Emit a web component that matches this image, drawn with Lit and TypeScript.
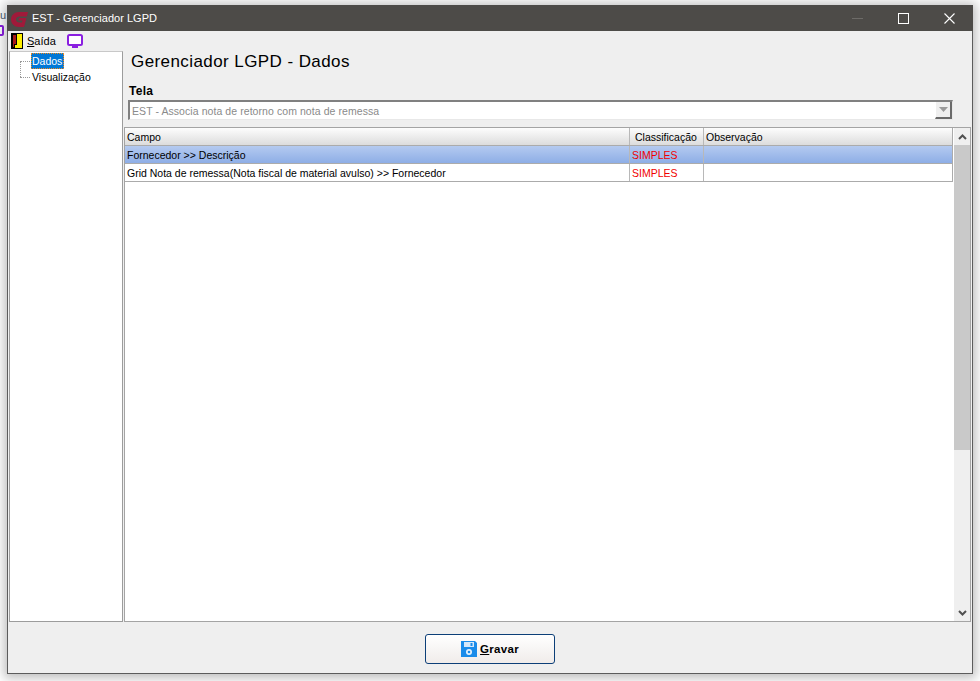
import { LitElement, html, css } from "lit";
import { customElement } from "lit/decorators.js";

@customElement("app-root")
export class AppRoot extends LitElement {
  static styles = css`
    :host {
      display: block;
      width: 980px;
      height: 681px;
      box-sizing: border-box;
      padding: 5px 7px 7px 7px;
      position: relative;
      background: #fff;
      overflow: hidden;
      font-family: "Liberation Sans", Arial, sans-serif;
      font-size: 10.5px;
      color: #000;
    }
    .bg-u { position: absolute; left: 0; top: 9px; font-size: 11px; color: #4a5a70; }
    .bg-box { position: absolute; left: -7px; top: 25px; width: 7px; height: 7px; border: 2px solid #8a1fe0; border-radius: 2px; }
    .window {
      position: relative;
      height: 669px;
      display: flex;
      flex-direction: column;
      background: #efefef;
      border: solid #5c5c5c;
      border-width: 0 1px 1px 1px;
      box-shadow: 0 1px 10px 3px rgba(0, 0, 0, 0.26);
      box-sizing: border-box;
    }
    .titlebar {
      height: 26px;
      margin: 0 -1px;
      background: #4d4b48;
      display: flex;
      align-items: center;
      color: #fff;
      font-size: 11px;
      letter-spacing: 0.02px;
      flex: none;
    }
    .logo { margin: 3px 0 0 4px; width: 17px; height: 15px; display: block; }
    .title-text { margin-left: 4px; flex: 1; }
    .ctrl { width: 46px; height: 26px; display: flex; align-items: center; justify-content: center; }
    .ctrl svg { display: block; }
    .ctrl.last { margin-right: 1px; }
    .menubar { height: 20px; display: flex; align-items: center; flex: none; font-size: 11px; }
    .door { margin-left: 3px; display: block; }
    .menu-label { margin-left: 4px; }
    .menu-label u { text-underline-offset: 1px; }
    .monitor { margin-left: 11px; display: block; }
    .body { flex: 1; display: flex; padding-left: 1px; min-height: 0; }
    .tree {
      width: 114px;
      box-sizing: border-box;
      background: #fff;
      border: 1px solid #9c9c9c;
      border-top-color: #c8c8c8;
      position: relative;
      padding: 1px 0 0 21px;
      flex: none;
    }
    .tree-line-v { position: absolute; left: 10px; top: 9px; height: 16px; border-left: 1px dotted #999; }
    .tree-line-h { position: absolute; left: 10px; width: 10px; border-top: 1px dotted #999; }
    .tl1 { top: 9px; }
    .tl2 { top: 25px; }
    .node { height: 16px; line-height: 17px; padding: 0 1px; width: max-content; box-sizing: border-box; }
    .node.sel { background: #0078d7; color: #fff; outline: 1px dotted #f08a1c; outline-offset: -1px; padding-right: 2px; }
    .main { flex: 1; margin-left: 1px; display: flex; flex-direction: column; min-width: 0; margin-right: 1px; }
    h1 {
      margin: 0;
      font-size: 17px;
      font-weight: 400;
      letter-spacing: 0.42px;
      padding: 1px 0 0 7px;
      height: 30px;
      line-height: 20px;
      box-sizing: border-box;
    }
    .label { font-weight: 700; font-size: 12px; padding-left: 5px; height: 17px; line-height: 20px; letter-spacing: 0.3px; }
    .combo {
      margin: 2px 18px 0 4px;
      height: 20px;
      box-sizing: border-box;
      background: #fff;
      border: solid #808080;
      border-width: 2px 1px 1px 2px;
      border-right-color: #e8e8e8;
      border-bottom-color: #e8e8e8;
      display: flex;
      align-items: center;
      padding-left: 2px;
      color: #8a8a8a;
      letter-spacing: 0.07px;
    }
    .combo span { flex: 1; }
    .combo-btn {
      width: 17px;
      height: 17px;
      box-sizing: border-box;
      background: #efefef;
      border: solid #6a6a6a;
      border-width: 0 2px 2px 0;
      border-left: 1px solid #fff;
      display: flex;
      align-items: center;
      justify-content: center;
    }
    .grid-wrap {
      flex: 1;
      margin-top: 7px;
      border: 1px solid #a4a4a4;
      background: #fff;
      display: flex;
      min-height: 0;
    }
    .grid { width: 828px; flex: none; }
    .row {
      display: grid;
      grid-template-columns: 505px 74px 1fr;
      height: 18px;
      line-height: 19px;
      border-bottom: 1px solid #ababab;
      border-right: 1px solid #ababab;
      box-sizing: border-box;
    }
    .row > div { padding-left: 2px; border-right: 1px solid #b8b8b8; white-space: nowrap; overflow: hidden; }
    .row > div:last-child { border-right: none; }
    .head { background: linear-gradient(#fdfdfd, #dcdcdc); }
    .head > div.c2 { padding-left: 5px; }
    .sel-row { background: linear-gradient(#b4caf0, #8eaee6); }
    .red { color: #f00000; }
    .sb { flex: 1; margin-left: 1px; background: #efefef; display: flex; flex-direction: column; align-items: stretch; }
    .sb-btn { height: 17px; display: flex; align-items: center; justify-content: center; flex: none; background: #efefef; }
    .sb-thumb { height: 305px; background: #c9c9c9; flex: none; }
    .sb-rest { flex: 1; }
    .footer { height: 51px; flex: none; display: flex; align-items: center; justify-content: center; padding-top: 3px; box-sizing: border-box; padding-right: 1px; }
    button {
      width: 130px;
      height: 30px;
      box-sizing: border-box;
      background: linear-gradient(#ffffff, #f0ecea);
      border: 1px solid #0c3f78;
      border-radius: 3px;
      display: flex;
      align-items: center;
      justify-content: center;
      gap: 3px;
      padding: 0 0 0 1px;
      font: 700 11.5px "Liberation Sans", Arial, sans-serif;
      letter-spacing: 0.3px;
      color: #000;
    }
    button svg { display: block; }
  `;

  render() {
    return html`
      <div class="bg-u">u</div>
      <div class="bg-box"></div>
      <div class="window">
        <div class="titlebar">
          <svg class="logo" viewBox="0 0 17 15">
            <path d="M17 0H8C3.500 0 0 3.300 0 7.500S3.500 15 8 15h5L15.500 6H8L7.300 8.500H11.500L11 10.500H8.500C6.500 10.500 5 9.300 5 7.500S6.500 4.500 8.500 4.500H15.800z" fill="#a01a3a"/>
          </svg>
          <div class="title-text">EST - Gerenciador LGPD</div>
          <div class="ctrl">
            <svg width="11" height="11" viewBox="0 0 11 11"><path d="M0 5.500H11" stroke="#6d6b68" stroke-width="1"/></svg>
          </div>
          <div class="ctrl">
            <svg width="11" height="11" viewBox="0 0 11 11"><rect x=".5" y=".5" width="10" height="10" fill="none" stroke="#fff"/></svg>
          </div>
          <div class="ctrl last">
            <svg width="11" height="11" viewBox="0 0 11 11"><path d="M.5 .5L10.500 10.500M10.500 .5L.5 10.500" stroke="#fff" stroke-width="1.100"/></svg>
          </div>
        </div>
        <div class="menubar">
          <svg class="door" width="12" height="16" viewBox="0 0 12 16">
            <rect width="12" height="16" fill="#000"/>
            <rect x="1" y="1" width="10" height="14" fill="#ffef00"/>
            <path d="M1 1h5v11H4v3H1z" fill="#000"/>
            <path d="M2 2h3v9H3v3H2z" fill="#a81818"/>
          </svg>
          <span class="menu-label"><u>S</u>aída</span>
          <svg class="monitor" width="16" height="14" viewBox="0 0 16 14">
            <rect x="1" y="1" width="14" height="10" rx="1.500" fill="#fff" stroke="#8a1fe0" stroke-width="2"/>
            <path d="M5 13H11" stroke="#8a1fe0" stroke-width="2"/>
          </svg>
        </div>
        <div class="body">
          <div class="tree">
            <div class="tree-line-v"></div>
            <div class="tree-line-h tl1"></div>
            <div class="tree-line-h tl2"></div>
            <div class="node sel">Dados</div>
            <div class="node">Visualização</div>
          </div>
          <div class="main">
            <h1>Gerenciador LGPD - Dados</h1>
            <div class="label">Tela</div>
            <div class="combo">
              <span>EST - Associa nota de retorno com nota de remessa</span>
              <div class="combo-btn">
                <svg width="9" height="5" viewBox="0 0 9 5"><path d="M0 0H9L4.500 5z" fill="#9a9a9a"/></svg>
              </div>
            </div>
            <div class="grid-wrap">
              <div class="grid">
                <div class="row head">
                  <div>Campo</div><div class="c2">Classificação</div><div>Observação</div>
                </div>
                <div class="row sel-row">
                  <div>Fornecedor >> Descrição</div><div class="red">SIMPLES</div><div></div>
                </div>
                <div class="row">
                  <div>Grid Nota de remessa(Nota fiscal de material avulso) >> Fornecedor</div><div class="red">SIMPLES</div><div></div>
                </div>
              </div>
              <div class="sb">
                <div class="sb-btn">
                  <svg width="9" height="6" viewBox="0 0 9 6"><path d="M1 5L4.500 1.500 8 5" fill="none" stroke="#505050" stroke-width="2"/></svg>
                </div>
                <div class="sb-thumb"></div>
                <div class="sb-rest"></div>
                <div class="sb-btn">
                  <svg width="9" height="6" viewBox="0 0 9 6"><path d="M1 1L4.500 4.500 8 1" fill="none" stroke="#505050" stroke-width="2"/></svg>
                </div>
              </div>
            </div>
          </div>
        </div>
        <div class="footer">
          <button>
            <svg width="16" height="16" viewBox="0 0 16 16">
              <path d="M0 0H14L16 2V16H0z" fill="#1a8cea"/>
              <rect x="3" y="1" width="10" height="5" fill="#d4e8fa"/>
              <rect x="9.500" y="2" width="2" height="3" fill="#1a8cea"/>
              <circle cx="8" cy="11" r="3" fill="#e6f2fd"/>
              <circle cx="8" cy="11" r="1.300" fill="#1a8cea"/>
            </svg>
            <span><u>G</u>ravar</span>
          </button>
        </div>
      </div>
    `;
  }
}
